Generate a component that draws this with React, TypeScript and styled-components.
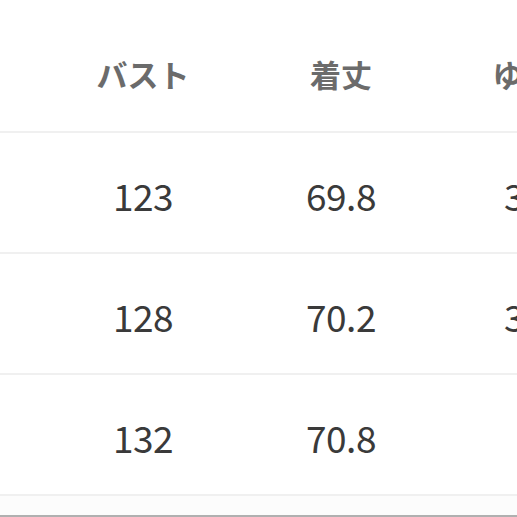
import styled, { createGlobalStyle } from "styled-components";

const GlobalStyle = createGlobalStyle`
  html, body {
    margin: 0;
    padding: 0;
    background: #ffffff;
  }
  body {
    font-family: "Noto Sans CJK JP", "Noto Sans", sans-serif;
    overflow: hidden;
  }
`;

const Page = styled.div`
  width: 517px;
  height: 517px;
  overflow: hidden;
  background: #ffffff;
`;

const Table = styled.div`
  display: grid;
  grid-template-columns: 44px repeat(3, 198px);
  width: max-content;
`;

const Row = styled.div<{ $height: number }>`
  display: contents;
  & > div {
    height: ${(p) => p.$height}px;
    border-bottom: 2px solid #f0f0f0;
  }
`;

const Cell = styled.div<{ $head?: boolean }>`
  display: flex;
  align-items: center;
  justify-content: center;
  white-space: nowrap;
  box-sizing: border-box;
  padding-top: ${(p) => (p.$head ? "16px" : "5px")};
  font-size: ${(p) => (p.$head ? "31px" : "37px")};
  font-weight: ${(p) => (p.$head ? 700 : 400)};
  color: ${(p) => (p.$head ? "#6b6b6b" : "#3a3a3a")};
  letter-spacing: ${(p) => (p.$head ? "0" : "-0.5px")};
`;

const Footer = styled.div`
  height: 19px;
  background: #fcfcfc;
  border-bottom: 2px solid #b0b0b0;
`;

const header = ["バスト", "着丈", "ゆき丈"];
const rows = [
  ["123", "69.8", "38.5"],
  ["128", "70.2", "39.5"],
  ["132", "70.8", "40"],
];

export default function App() {
  return (
    <Page>
      <GlobalStyle />
      <Table>
        <Row $height={133}>
          <Cell $head />
          {header.map((h) => (
            <Cell $head key={h}>
              {h}
            </Cell>
          ))}
        </Row>
        {rows.map((r, i) => (
          <Row $height={121} key={i}>
            <Cell />
            {r.map((v, j) => (
              <Cell key={j}>{v}</Cell>
            ))}
          </Row>
        ))}
      </Table>
      <Footer />
    </Page>
  );
}
